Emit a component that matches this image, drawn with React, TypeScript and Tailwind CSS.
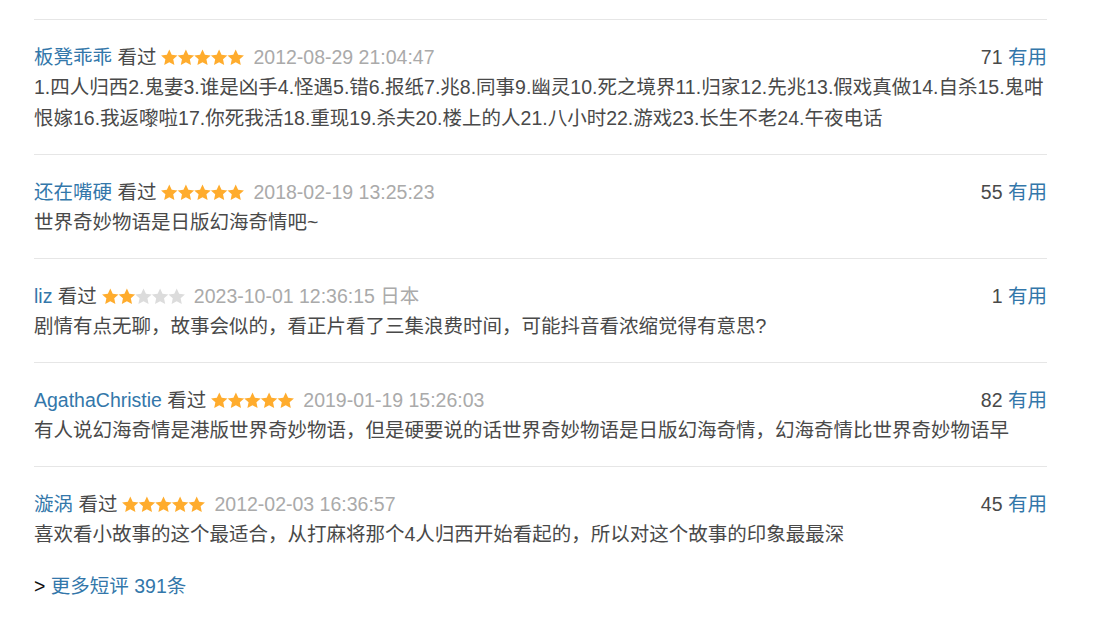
import React from 'react';

interface Comment {
    user: string;
    rating: number;
    time: string;
    location?: string;
    votes: number;
    text: string;
}

const comments: Comment[] = [
    {
        user: '板凳乖乖',
        rating: 5,
        time: '2012-08-29 21:04:47',
        votes: 71,
        text: '1.四人归西2.鬼妻3.谁是凶手4.怪遇5.错6.报纸7.兆8.同事9.幽灵10.死之境界11.归家12.先兆13.假戏真做14.自杀15.鬼咁恨嫁16.我返嚟啦17.你死我活18.重现19.杀夫20.楼上的人21.八小时22.游戏23.长生不老24.午夜电话',
    },
    {
        user: '还在嘴硬',
        rating: 5,
        time: '2018-02-19 13:25:23',
        votes: 55,
        text: '世界奇妙物语是日版幻海奇情吧~',
    },
    {
        user: 'liz',
        rating: 2,
        time: '2023-10-01 12:36:15',
        location: '日本',
        votes: 1,
        text: '剧情有点无聊，故事会似的，看正片看了三集浪费时间，可能抖音看浓缩觉得有意思?',
    },
    {
        user: 'AgathaChristie',
        rating: 5,
        time: '2019-01-19 15:26:03',
        votes: 82,
        text: '有人说幻海奇情是港版世界奇妙物语，但是硬要说的话世界奇妙物语是日版幻海奇情，幻海奇情比世界奇妙物语早',
    },
    {
        user: '漩涡',
        rating: 5,
        time: '2012-02-03 16:36:57',
        votes: 45,
        text: '喜欢看小故事的这个最适合，从打麻将那个4人归西开始看起的，所以对这个故事的印象最最深',
    },
];

const STAR = 'M8.25 0.2 L10.66 5.48 L16.43 6.14 L12.15 10.07 L13.31 15.76 L8.25 12.9 L3.19 15.76 L4.35 10.07 L0.07 6.14 L5.84 5.48 Z';

function Stars({ rating }: { rating: number }) {
    return (
        <svg width="83" height="17" viewBox="0 0 82.5 16.5" className="inline-block mx-[5px] -mt-[3px] align-middle">
            {[0, 1, 2, 3, 4].map((i) => (
                <path
                    key={i}
                    d={STAR}
                    transform={`translate(${i * 16.5} 0)`}
                    fill={i < rating ? '#ffac2d' : '#dcdcdc'}
                />
            ))}
        </svg>
    );
}

export default function App() {
    return (
        <div
            className="w-[1107px] h-[620px] bg-white pt-[19px] pl-[34px]"
            style={{ fontFamily: '"Liberation Sans", Arial, "Noto Sans CJK SC", sans-serif' }}
        >
            <div className="w-[1013px] text-[19.5px] text-[#494949]">
                {comments.map((c) => (
                    <div key={c.user} className="border-t border-[#e6e6e6] pt-[22px] pb-[20px]">
                        <div className="flex justify-between leading-[30px] whitespace-nowrap">
                            <div>
                                <span className="text-[#3377aa]">{c.user}</span>
                                <span> 看过</span>
                                <Stars rating={c.rating} />
                                <span className="text-[#aaaaaa] ml-[4px]">{c.time}</span>
                                {c.location && <span className="text-[#aaaaaa]"> {c.location}</span>}
                            </div>
                            <div>
                                <span>{c.votes}</span>{' '}
                                <span className="text-[#3377aa]">有用</span>
                            </div>
                        </div>
                        <p className="leading-[31px] -mr-[4px]">{c.text}</p>
                    </div>
                ))}
                <div className="leading-[30px] pt-[1px]">
                    <span className="text-[#111]">&gt; </span>
                    <span className="text-[#3377aa]">更多短评 391条</span>
                </div>
            </div>
        </div>
    );
}
